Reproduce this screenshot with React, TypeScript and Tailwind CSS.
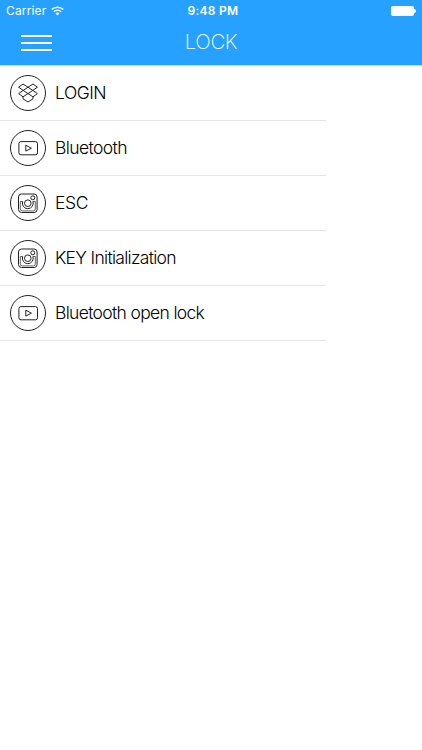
import type { ReactNode } from 'react';

type IconName = 'dropbox' | 'youtube' | 'instagram';

const menuItems: { label: string; icon: IconName; tracking: string }[] = [
  { label: 'LOGIN', icon: 'dropbox', tracking: 'tracking-[-0.5px]' },
  { label: 'Bluetooth', icon: 'youtube', tracking: 'tracking-[-0.6px]' },
  { label: 'ESC', icon: 'instagram', tracking: 'tracking-[-0.3px]' },
  { label: 'KEY Initialization', icon: 'instagram', tracking: 'tracking-[-0.7px]' },
  { label: 'Bluetooth open lock', icon: 'youtube', tracking: 'tracking-[-0.67px]' },
];

const glyphs: Record<IconName, ReactNode> = {
  dropbox: (
    <>
      <path d="M13 9 18 12.2 13.2 15.4 8.6 12.2Z" />
      <path d="M23 9 18 12.2 22.8 15.4 27.4 12.2Z" />
      <path d="M13.2 15.4 18 18.6 13 21.8 8.6 18.6Z" />
      <path d="M22.8 15.4 18 18.6 23 21.8 27.4 18.6Z" />
      <path d="M13 21.8v2l5 3.2 5-3.2v-2" />
    </>
  ),
  youtube: (
    <>
      <rect x="8.9" y="11.6" width="18.6" height="13.2" rx="2" />
      <path d="M15.8 15.2v5.9l5.6-2.9Z" />
    </>
  ),
  instagram: (
    <>
      <rect x="8.5" y="9" width="18.6" height="18.5" rx="3" />
      <path d="M12.7 16.5h-2.4v7.5a1.9 1.9 0 0 0 1.9 1.9h11.2a1.9 1.9 0 0 0 1.9-1.9v-7.5h-2.4" strokeWidth="0.7" />
      <path d="M12.7 16.5a5.4 5.4 0 1 0 10.2 0" />
      <circle cx="17.8" cy="18.2" r="3.3" />
      <circle cx="22.8" cy="12.8" r="2" />
    </>
  ),
};

function RoundIcon({ name }: { name: IconName }) {
  return (
    <svg
      width="36"
      height="36"
      viewBox="0 0 36 36"
      fill="none"
      stroke="#222222"
      strokeWidth="1"
      strokeLinejoin="round"
      className="shrink-0"
    >
      <circle cx="18" cy="18" r="17.5" />
      {glyphs[name]}
    </svg>
  );
}

function StatusBar() {
  return (
    <div className="flex h-[22px] items-center justify-between px-[6px] text-white">
      <div className="flex w-[120px] items-center gap-[5px]">
        <span className="text-[12px] leading-none tracking-[0.15px]">Carrier</span>
        {/* wifi */}
        <svg width="13" height="10" viewBox="0 0 13 10" fill="none" stroke="white" strokeWidth="1.5">
          <path d="M0.7 3.5a8.3 8.3 0 0 1 11.6 0" />
          <path d="M2.8 5.7a5.3 5.3 0 0 1 7.4 0" />
          <path d="M6.5 9.6 4.5 7.5a3 3 0 0 1 4 0Z" fill="white" stroke="none" />
        </svg>
      </div>
      <span className="pl-[4px] text-[12px] font-semibold leading-none tracking-[0.25px]">9:48 PM</span>
      <div className="flex w-[120px] items-center justify-end gap-[0.5px]">
        <span className="h-[10px] w-[23px] rounded-[2px] bg-white" />
        <span className="h-[4px] w-[1.5px] rounded-r-full bg-white" />
      </div>
    </div>
  );
}

export default function App() {
  return (
    <div className="min-h-screen w-full bg-white font-['Inter','Liberation_Sans',sans-serif]">
      <header className="h-[66px] border-b border-[#b5e0ff] bg-[#27a1ff]">
        <StatusBar />
        <div className="grid h-[42px] grid-cols-[1fr_auto_1fr] items-center px-[20px]">
          <button aria-label="Menu" className="ml-[0.5px] flex w-[31px] flex-col gap-[5px]">
            <span className="h-[2px] bg-white" />
            <span className="h-[2px] bg-white" />
            <span className="h-[2px] bg-white" />
          </button>
          <h1 className="pb-[1px] text-[20.5px] font-extralight leading-none tracking-[-0.4px] text-white">LOCK</h1>
        </div>
      </header>

      <ul className="w-[326px]">
        {menuItems.map((item) => (
          <li
            key={item.label}
            className="flex h-[55px] items-center gap-[8px] border-b border-[#e6e6e6] pl-[10px]"
          >
            <RoundIcon name={item.icon} />
            <span className={`pl-[1px] text-[17.5px] font-light leading-none text-black ${item.tracking}`}>
              {item.label}
            </span>
          </li>
        ))}
      </ul>
    </div>
  );
}
